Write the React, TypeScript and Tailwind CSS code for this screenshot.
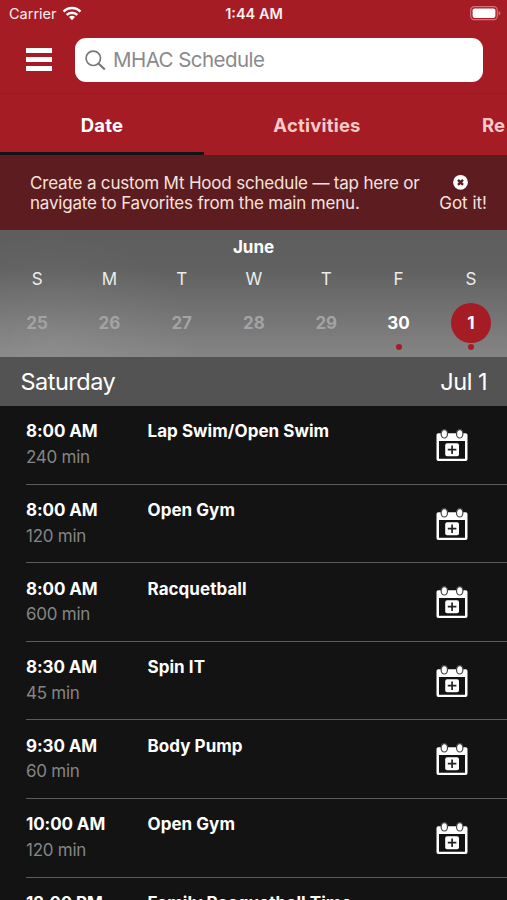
import React from 'react';

const TABS = [
  { label: 'Date', active: true },
  { label: 'Activities', active: false },
];

const DAYS = [
  { letter: 'S', day: 25, state: 'past', dot: false },
  { letter: 'M', day: 26, state: 'past', dot: false },
  { letter: 'T', day: 27, state: 'past', dot: false },
  { letter: 'W', day: 28, state: 'past', dot: false },
  { letter: 'T', day: 29, state: 'past', dot: false },
  { letter: 'F', day: 30, state: 'open', dot: true },
  { letter: 'S', day: 1, state: 'selected', dot: true },
];

const CLASSES = [
  { time: '8:00 AM', length: '240 min', name: 'Lap Swim/Open Swim' },
  { time: '8:00 AM', length: '120 min', name: 'Open Gym' },
  { time: '8:00 AM', length: '600 min', name: 'Racquetball' },
  { time: '8:30 AM', length: '45 min', name: 'Spin IT' },
  { time: '9:30 AM', length: '60 min', name: 'Body Pump' },
  { time: '10:00 AM', length: '120 min', name: 'Open Gym' },
  { time: '12:00 PM', length: '', name: 'Family Racquetball Time' },
];

const DAY_STYLES: Record<string, string> = {
  past: 'text-[#a3a3a3]',
  open: 'text-white',
  selected: 'bg-[#a51c24] text-white',
};

const WifiIcon = () => (
  <svg width="20" height="15" viewBox="0 0 20 15" className="mb-[2px] ml-[5px]">
    <g fill="none" stroke="#fff" strokeWidth="2.5">
      <path d="M1.6 5.6a11.8 11.8 0 0 1 16.8 0" />
      <path d="M4.7 8.9a7.5 7.5 0 0 1 10.6 0" />
    </g>
    <path d="M10 14.2 7 11.1a4.3 4.3 0 0 1 6 0z" fill="#fff" />
  </svg>
);

const BatteryIcon = () => (
  <svg width="31" height="15" viewBox="0 0 31 15" className="mb-px">
    <rect x="0.7" y="0.7" width="26.6" height="13" rx="3.6" fill="none" stroke="#d07478" strokeWidth="1.2" />
    <rect x="2.6" y="2.5" width="22.8" height="9.4" rx="1.8" fill="#fff" />
    <path d="M28.6 5c1.2.5 1.8 1.3 1.8 2.2s-.6 1.7-1.8 2.2z" fill="#d07478" />
  </svg>
);

const CalendarAddIcon = () => (
  <svg width="32" height="34" viewBox="0 0 32 34">
    <path
      fillRule="evenodd"
      fill="#fff"
      d="M2.3 4.3h27.4a1.8 1.8 0 0 1 1.8 1.8v24.2a1.8 1.8 0 0 1-1.8 1.8H2.3a1.8 1.8 0 0 1-1.8-1.8V6.1a1.8 1.8 0 0 1 1.8-1.8zM3 12v17.7h26V12z"
    />
    <ellipse cx="8.3" cy="4.8" rx="3.2" ry="4.2" fill="#fff" stroke="#444" strokeWidth="1.2" />
    <ellipse cx="23.7" cy="4.8" rx="3.2" ry="4.2" fill="#fff" stroke="#444" strokeWidth="1.2" />
    <rect x="9.2" y="14.2" width="13.8" height="13" rx="2" fill="#fff" />
    <path d="M16.1 16.4V25M11.8 20.7h8.6" stroke="#222" strokeWidth="1.7" />
  </svg>
);

export const App: React.FC = () => {
  return (
    <div className="flex h-[900px] w-[507px] flex-col overflow-hidden bg-[#131313] font-['Inter',sans-serif] text-white">
      {/* Status bar */}
      <div className="grid h-[28px] shrink-0 grid-cols-3 items-center bg-[#a51c24] pr-[6px] pl-[9px] text-[14.5px] leading-none text-[#fdeeee]">
        <div className="flex items-center">
          <span>Carrier</span>
          <WifiIcon />
        </div>
        <span className="pr-[2px] text-center font-semibold">1:44 AM</span>
        <div className="flex justify-end">
          <BatteryIcon />
        </div>
      </div>

      {/* Search header */}
      <div className="flex h-[66px] shrink-0 items-start border-b border-[#98191f] bg-[#a51c24] pt-[10px] pl-[26px]">
        <button className="mt-[10px] flex w-[26px] flex-col gap-[4px]">
          <span className="h-[5px] w-full bg-white" />
          <span className="h-[5px] w-full bg-white" />
          <span className="h-[5px] w-full bg-white" />
        </button>
        <div className="ml-[23px] flex h-[44px] w-[407.5px] items-center rounded-[11px] bg-white pl-[10px] text-[#8a8a8c]">
          <svg width="21" height="21" viewBox="0 0 21 21" fill="none" stroke="#77777a" strokeWidth="1.7">
            <circle cx="8.3" cy="8.3" r="7.2" />
            <path d="m13.5 13.5 6.3 6" strokeWidth="2.2" />
          </svg>
          <span className="mt-px ml-[7px] text-[20.5px] leading-none tracking-[-0.54px]">MHAC Schedule</span>
        </div>
      </div>

      {/* Tabs */}
      <div className="flex h-[61px] shrink-0 bg-[#a51c24] text-[18.5px] font-bold tracking-[0.2px]">
        {TABS.map((tab) => (
          <div
            key={tab.label}
            className={
              tab.active
                ? 'flex w-[204px] shrink-0 items-center justify-center border-b-[3px] border-[#151213] pt-[6px] text-white'
                : 'flex w-[226px] shrink-0 items-center justify-center pt-[3px] text-[#f8c9c9]'
            }
          >
            {tab.label}
          </div>
        ))}
        <div className="flex shrink-0 items-center pt-[3px] pl-[52px] text-[#f8c9c9]">Re</div>
      </div>

      {/* Hint banner */}
      <div className="flex h-[75px] shrink-0 items-center justify-between bg-[#5d1d20] pr-[20px] pl-[30px] text-[17px] leading-[20px] text-[#f6e2de]">
        <p className="tracking-[-0.19px]">
          Create a custom Mt Hood schedule — tap here or
          <br />
          navigate to Favorites from the main menu.
        </p>
        <button className="flex flex-col items-center">
          <svg width="15" height="20" viewBox="0 0 15 20" className="mr-[5px]">
            <circle cx="7.5" cy="9.3" r="7.4" fill="#fff" />
            <path d="m5 6.8 5 5m0-5-5 5" stroke="#5d1d20" strokeWidth="2.4" />
          </svg>
          <span className="whitespace-nowrap">Got it!</span>
        </button>
      </div>

      {/* Week strip */}
      <div className="h-[127px] shrink-0 bg-[radial-gradient(150px_110px_at_50px_115px,#ffffff14,#ffffff00),linear-gradient(#5e5e5e,#606060_30%,#858585)] pt-[7px]">
        <div className="text-center text-[17px] leading-[20px] font-bold">June</div>
        <div className="mt-[12px] grid grid-cols-7 pl-px">
          {DAYS.map((d) => (
            <div key={d.day} className="flex flex-col items-center">
              <span className="text-[17px] leading-[20px] text-[#ececec]">{d.letter}</span>
              <span
                className={`mt-[14px] flex size-[40px] items-center justify-center rounded-full pt-px text-[17px] font-bold ${DAY_STYLES[d.state]}`}
              >
                {d.day}
              </span>
              {d.dot && <span className="mt-[0.5px] size-[6px] rounded-full bg-[#a51c24]" />}
            </div>
          ))}
        </div>
      </div>

      {/* Selected day */}
      <div className="flex h-[49px] shrink-0 items-center justify-between bg-[#535353] pt-px pr-[20px] pl-[20.5px] text-[23.5px] tracking-[-0.5px]">
        <span>Saturday</span>
        <span>Jul 1</span>
      </div>

      {/* Classes */}
      <div className="pl-[26px]">
        {CLASSES.map((c, i) => (
          <div key={i} className="flex h-[78.6px] border-b-[1.5px] border-[#5c5c5c] pt-[15.4px] text-[17px]">
            <div className="w-[121.5px] shrink-0">
              <div className="leading-[21px] font-bold tracking-[-0.1px]">{c.time}</div>
              <div className="mt-[4.6px] leading-[20px] tracking-[-0.25px] text-[#858585]">{c.length}</div>
            </div>
            <div className="w-[288px] shrink-0 leading-[21px] font-bold tracking-[0.05px]">{c.name}</div>
            <div className="mt-[7.6px]">
              <CalendarAddIcon />
            </div>
          </div>
        ))}
      </div>
    </div>
  );
};

export default App;
